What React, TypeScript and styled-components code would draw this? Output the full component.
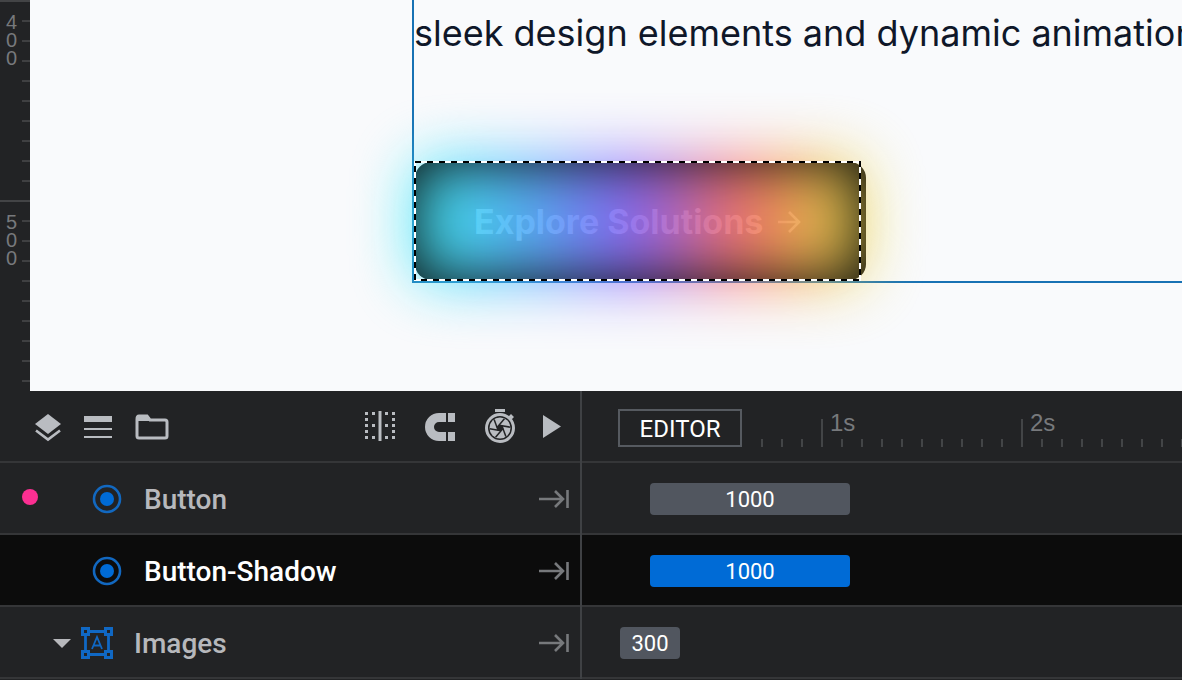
import React from "react";
import styled, { createGlobalStyle } from "styled-components";

const GlobalStyle = createGlobalStyle`
  *, *::before, *::after { box-sizing: border-box; }
  body { margin: 0; background: #222325; font-family: Roboto, sans-serif; }
  button { font: inherit; color: inherit; background: none; border: 0; padding: 0; }
`;

const Page = styled.div`
  display: flex;
  flex-direction: column;
  height: 100vh;
  overflow: hidden;
`;

const Stage = styled.section`
  flex: 1;
  min-height: 0;
  display: flex;
  background: #f9fafc;
`;

const Ruler = styled.div`
  flex: none;
  width: 30px;
  overflow: hidden;
  background:
    repeating-linear-gradient(#434446 0 2px, transparent 2px 200px),
    repeating-linear-gradient(#3f4042 0 2px, transparent 2px 20px) 22px 0 / 8px 100% no-repeat,
    #222325;
  color: #77797c;
  font: 20px/18px "Liberation Sans", sans-serif;
`;

const RulerSegment = styled.div`
  height: 200px;
  padding: 13px 0 0 6px;
`;

const RulerDigit = styled.div``;

const Canvas = styled.main`
  flex: 1;
  min-width: 0;
  overflow: hidden;
  padding-left: 382px;
`;

const Artboard = styled.div`
  height: 283px;
  border: solid #1872b4;
  border-width: 0 0 2px 2px;
  padding-top: 9px;
`;

const Copy = styled.p`
  margin: 0 0 104px;
  font: 36px/48px Inter, sans-serif;
  color: #0f1729;
  white-space: nowrap;
`;

const Selection = styled.div`
  position: relative;
  display: flex;
  align-items: center;
  width: 447px;
  height: 120px;
`;

const CallToAction = styled.button`
  flex: none;
  display: flex;
  align-items: center;
  gap: 12px;
  width: 451px;
  height: 118px;
  margin-left: 1px;
  padding: 2px 0 0 59px;
  border-radius: 16px;
  background: #0a0a0a;
  color: #b4b4b4;
  font: 700 34px/48px Inter, sans-serif;
  white-space: nowrap;
`;

const Glow = styled.div`
  position: absolute;
  inset: 0;
  border-radius: 16px;
  background: linear-gradient(90deg, #42f2f8 0%, #58b8ff 25%, #9068ff 49%, #ff7470 73%, #f4a854 85%, #e8e250 100%);
  filter: blur(31px);
  opacity: 0.95;
  pointer-events: none;
`;

const Marquee = styled.svg`
  position: absolute;
  inset: 0;
  width: 100%;
  height: 100%;
`;

const Timeline = styled.section`
  flex: none;
  padding-bottom: 1px;
  background: #222325;
`;

const Row = styled.div<{ $selected?: boolean }>`
  display: flex;
  height: 72px;
  border-bottom: 2px solid #353638;
  background: ${(p) => (p.$selected ? "#0c0c0c" : "#222325")};
  color: ${(p) => (p.$selected ? "#ffffff" : "#b7b8bc")};
`;

const Side = styled.div`
  flex: none;
  display: flex;
  align-items: center;
  width: 582px;
  padding-right: 9px;
  margin-bottom: -2px;
  border-right: 2px solid #3f4144;
`;

const Tools = styled(Side)`
  justify-content: space-between;
  padding: 0 18px 0 30px;
  color: #b9bcc1;
`;

const Group = styled.div<{ $gap: number }>`
  display: flex;
  align-items: center;
  gap: ${(p) => p.$gap}px;
`;

const IconButton = styled.button`
  display: flex;
  cursor: pointer;
`;

const Track = styled.div`
  flex: 1;
  min-width: 0;
  display: flex;
  align-items: center;
  padding-top: 2px;
  overflow: hidden;
`;

const TimeTrack = styled(Track)`
  padding-top: 4px;
`;

const EditorButton = styled.button`
  flex: none;
  width: 124px;
  height: 38px;
  margin-left: 36px;
  border: 2px solid #565a60;
  padding-top: 2px;
  color: #ffffff;
  font-size: 24px;
  line-height: 32px;
`;

const Scale = styled.div`
  display: flex;
  align-items: flex-end;
  height: 38px;
  padding-left: 19px;
`;

const Tick = styled.div<{ $major: boolean }>`
  flex: none;
  width: 20px;
  height: ${(p) => (p.$major ? 28 : 8)}px;
  border-left: 2px solid #434547;
  padding-left: 7px;
  color: #77797c;
  font: 24px/8px "Liberation Sans", sans-serif;
`;

const Lead = styled.div<{ $indent: number; $gap: number }>`
  display: flex;
  align-items: center;
  gap: ${(p) => p.$gap}px;
  padding-left: ${(p) => p.$indent}px;
  flex: 1;
`;

const Marker = styled.span`
  width: 16px;
  height: 16px;
  margin: 0 32px 4px 0;
  border-radius: 50%;
  background: #fc2f92;
`;

const LayerName = styled.span`
  padding-top: 2px;
  font-size: 28px;
  line-height: 36px;
  font-weight: 500;
`;

const Clip = styled.div<{ $selected?: boolean }>`
  flex: none;
  height: 32px;
  border-radius: 4px;
  background: ${(p) => (p.$selected ? "#006bd6" : "#51565f")};
  color: #ffffff;
  font-size: 22px;
  line-height: 34px;
  text-align: center;
`;

const LayersIcon = () => (
  <svg width="36" height="36" viewBox="0 0 36 36">
    <path d="M18 5 31 15 18 25 5 15Z" fill="currentColor" />
    <path d="M6 21.500 18 30.500 30 21.500" fill="none" stroke="currentColor" strokeWidth="2.600" />
  </svg>
);

const LinesIcon = () => (
  <svg width="32" height="36" viewBox="0 0 32 36" fill="currentColor">
    <path d="M0 7h28v6H0zM0 19h28v2H0zM0 27h28v2H0z" />
  </svg>
);

const FolderIcon = () => (
  <svg width="36" height="36" viewBox="-1 0 36 36">
    <path d="M2 10v17q0 2 2 2h26q2 0 2-2V13q0-2-2-2H15L12 7H4Q2 7 2 10Z" fill="none" stroke="currentColor" strokeWidth="3" />
    <path d="M2 7h11l3 5H2z" fill="currentColor" />
  </svg>
);

const SnapIcon = () => (
  <svg width="30" height="36" viewBox="0 1 30 36" fill="currentColor">
    {[3, 9, 15, 21, 27].map((y) => (
      <path key={y} d={`M0 ${y + 1}h3v3h-3zM27 ${y + 1}h3v3h-3z`} />
    ))}
    {[4, 16, 28].map((y) => (
      <path key={y} d={`M7 ${y}h3v3h-3zM20 ${y}h3v3h-3z`} />
    ))}
    <path d="M13.500 3h3v30h-3z" />
  </svg>
);

const MagnetIcon = () => (
  <svg width="30" height="36" viewBox="0 0 30 36" fill="currentColor">
    <path d="M21 4v9h-7a5 5 0 0 0 0 10h7v9h-7a14 14 0 0 1 0-28ZM23 4h7v9h-7zM23 23h7v9h-7z" />
  </svg>
);

const ShutterTimerIcon = () => (
  <svg width="30" height="36" viewBox="0 1 30 36">
    <path d="M10 1h10v3H10zM23 9l3-3 3 3-3 3z" fill="currentColor" />
    <circle cx="15" cy="20" r="13.500" fill="none" stroke="currentColor" strokeWidth="3" />
    <circle cx="15" cy="20" r="10.500" fill="currentColor" />
    <g stroke="#222325" strokeWidth="1.500">
      {[0, 60, 120, 180, 240, 300].map((a) => (
        <path key={a} d="M13.500 17.400H25" transform={`rotate(${a + 10} 15 20)`} />
      ))}
    </g>
    <circle cx="15" cy="20" r="2.800" fill="#222325" />
  </svg>
);

const PlayIcon = () => (
  <svg width="20" height="36" viewBox="0 0 20 36" fill="currentColor">
    <path d="M1 6 19 17.500 1 29Z" />
  </svg>
);

const TargetIcon = () => (
  <svg width="30" height="30" viewBox="0 0 30 30">
    <circle cx="15" cy="15" r="13" fill="none" stroke="#1268c0" strokeWidth="2.600" />
    <circle cx="15" cy="15" r="7" fill="#006bd6" />
  </svg>
);

const GroupIcon = () => (
  <svg width="32" height="32" viewBox="0 0 32 32" fill="none" stroke="#1068c4">
    <path d="M9 4.500h14M9 27.500h14M4.500 9v14M27.500 9v14" strokeWidth="2.800" />
    <path d="M1.500 1.500h6v6h-6zM24.500 1.500h6v6h-6zM1.500 24.500h6v6h-6zM24.500 24.500h6v6h-6z" strokeWidth="3" />
    <path d="M11 22 16 10 21 22M12.500 18.500h7" strokeWidth="1.800" />
  </svg>
);

const CaretIcon = () => (
  <svg width="18" height="32" viewBox="0 0 18 32" fill="#b7b8bc">
    <path d="M0 12h18l-9 9z" />
  </svg>
);

const ToEndIcon = () => (
  <svg width="32" height="24" viewBox="0 0 32 24" fill="none" stroke="#77797c" strokeWidth="2.600">
    <path d="M0 12h24M16 4l8 8-8 8M28.500 3v18" />
  </svg>
);

const ArrowIcon = () => (
  <svg width="28" height="28" viewBox="0 0 28 28" fill="none" stroke="currentColor" strokeWidth="2.600">
    <path d="M3 14h21M14 4l10 10-10 10" />
  </svg>
);

const PX_PER_MS = 200 / 1000;
const TRACK_ORIGIN = 38;

const layers = [
  { name: "Button", start: 150, duration: 1000, marker: true, group: false, selected: false },
  { name: "Button-Shadow", start: 150, duration: 1000, marker: false, group: false, selected: true },
  { name: "Images", start: 0, duration: 300, marker: false, group: true, selected: false },
];

export default function App() {
  return (
    <>
      <GlobalStyle />
      <Page>
        <Stage>
          <Ruler>
            {[400, 500].map((n) => (
              <RulerSegment key={n}>
                {String(n).split("").map((d, i) => (
                  <RulerDigit key={i}>{d}</RulerDigit>
                ))}
              </RulerSegment>
            ))}
          </Ruler>
          <Canvas>
            <Artboard>
              <Copy>sleek design elements and dynamic animations</Copy>
              <Selection>
                <CallToAction>
                  Explore Solutions <ArrowIcon />
                </CallToAction>
                <Glow />
                <Marquee>
                  <rect x="1" y="1" width="445" height="118" fill="none" stroke="#fff" strokeWidth="2" />
                  <rect x="1" y="1" width="445" height="118" fill="none" stroke="#000" strokeWidth="2" strokeDasharray="6" />
                </Marquee>
              </Selection>
            </Artboard>
          </Canvas>
        </Stage>
        <Timeline>
          <Row>
            <Tools>
              <Group $gap={18}>
                <IconButton aria-label="Layers"><LayersIcon /></IconButton>
                <IconButton aria-label="List"><LinesIcon /></IconButton>
                <IconButton aria-label="Folder"><FolderIcon /></IconButton>
              </Group>
              <Group $gap={27}>
                <Group $gap={30}>
                  <IconButton aria-label="Snap to grid"><SnapIcon /></IconButton>
                  <IconButton aria-label="Magnet"><MagnetIcon /></IconButton>
                  <IconButton aria-label="Speed"><ShutterTimerIcon /></IconButton>
                </Group>
                <IconButton aria-label="Play"><PlayIcon /></IconButton>
              </Group>
            </Tools>
            <TimeTrack>
              <EditorButton>EDITOR</EditorButton>
              <Scale>
                {Array.from({ length: 60 }, (_, i) => i + 7).map((n) => (
                  <Tick key={n} $major={n % 10 === 0}>
                    {n % 10 === 0 ? `${n / 10}s` : null}
                  </Tick>
                ))}
              </Scale>
            </TimeTrack>
          </Row>
          {layers.map((l) => (
            <Row key={l.name} $selected={l.selected}>
              <Side>
                <Lead $indent={l.group ? 53 : l.marker ? 22 : 92} $gap={l.group ? 21 : 22}>
                  {l.marker && <Marker />}
                  {l.group ? (
                    <Group $gap={10}>
                      <CaretIcon />
                      <GroupIcon />
                    </Group>
                  ) : (
                    <TargetIcon />
                  )}
                  <LayerName>{l.name}</LayerName>
                </Lead>
                <IconButton aria-label={`Extend ${l.name} to end`}><ToEndIcon /></IconButton>
              </Side>
              <Track>
                <Clip
                  $selected={l.selected}
                  style={{ marginLeft: TRACK_ORIGIN + l.start * PX_PER_MS, width: l.duration * PX_PER_MS }}
                >
                  {l.duration}
                </Clip>
              </Track>
            </Row>
          ))}
        </Timeline>
      </Page>
    </>
  );
}
